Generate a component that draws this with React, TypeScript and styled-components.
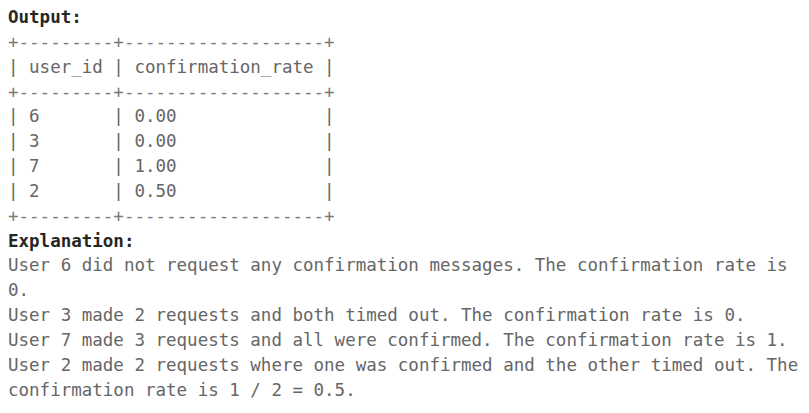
import * as React from "react";
import styled, { createGlobalStyle } from "styled-components";

const GlobalStyle = createGlobalStyle`
  html, body {
    margin: 0;
    padding: 0;
    background: #ffffff;
  }
`;

const Page = styled.div`
  padding: 5px 8px 0 8px;
`;

const Pre = styled.pre`
  margin: 0;
  font-family: "DejaVu Sans Mono", "Liberation Mono", monospace;
  font-size: 17.5px;
  line-height: 24.85px;
  color: #666666;
  white-space: pre;
`;

const Label = styled.strong`
  display: block;
  font-weight: 700;
  color: #262626;
`;

const Line = styled.span<{ $border?: boolean }>`
  display: block;
  color: ${props => (props.$border ? "#7a7a7a" : "inherit")};
`;

const border = "+---------+-------------------+";

const tableRows: string[] = [
  border,
  "| user_id | confirmation_rate |",
  border,
  "| 6       | 0.00              |",
  "| 3       | 0.00              |",
  "| 7       | 1.00              |",
  "| 2       | 0.50              |",
  border
];

const explanation: string[] = [
  "User 6 did not request any confirmation messages. The confirmation rate is",
  "0.",
  "User 3 made 2 requests and both timed out. The confirmation rate is 0.",
  "User 7 made 3 requests and all were confirmed. The confirmation rate is 1.",
  "User 2 made 2 requests where one was confirmed and the other timed out. The",
  "confirmation rate is 1 / 2 = 0.5."
];

export default function App(): JSX.Element {
  return (
    <>
      <GlobalStyle />
      <Page>
        <Pre>
          <Label>Output:</Label>
          {tableRows.map((row, i) => (
            <Line key={"t" + i} $border={row.startsWith("+")}>{row}</Line>
          ))}
          <Label>Explanation:</Label>
          {explanation.map((text, i) => (
            <Line key={"e" + i}>{text}</Line>
          ))}
        </Pre>
      </Page>
    </>
  );
}
